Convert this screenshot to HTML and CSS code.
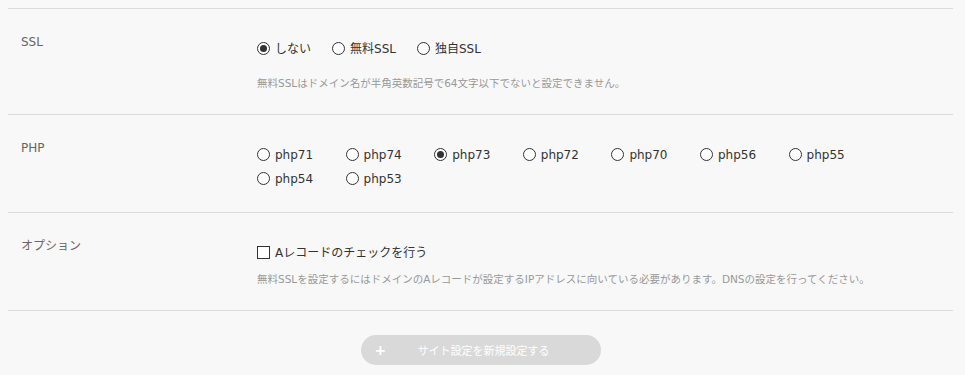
FILE: index.html
```html
<!DOCTYPE html>
<html lang="ja">

<head>
  <meta charset="UTF-8">
  <meta name="viewport" content="width=device-width, initial-scale=1.0">
  <title>サイト設定</title>
  <link rel="stylesheet" href="styles.css">
</head>

<body>
  <div class="settings">
    <div class="row">
      <div class="row-label">SSL</div>
      <div class="row-body">
        <div class="choices">
          <label class="choice"><input type="radio" name="ssl" checked><span>しない</span></label>
          <label class="choice"><input type="radio" name="ssl"><span>無料SSL</span></label>
          <label class="choice"><input type="radio" name="ssl"><span>独自SSL</span></label>
        </div>
        <p class="note note-spaced">無料SSLはドメイン名が半角英数記号で64文字以下でないと設定できません。</p>
      </div>
    </div>

    <div class="row">
      <div class="row-label">PHP</div>
      <div class="row-body">
        <div class="choices-grid">
          <label class="choice"><input type="radio" name="php"><span>php71</span></label>
          <label class="choice"><input type="radio" name="php"><span>php74</span></label>
          <label class="choice"><input type="radio" name="php" checked><span>php73</span></label>
          <label class="choice"><input type="radio" name="php"><span>php72</span></label>
          <label class="choice"><input type="radio" name="php"><span>php70</span></label>
          <label class="choice"><input type="radio" name="php"><span>php56</span></label>
          <label class="choice"><input type="radio" name="php"><span>php55</span></label>
          <label class="choice"><input type="radio" name="php"><span>php54</span></label>
          <label class="choice"><input type="radio" name="php"><span>php53</span></label>
        </div>
      </div>
    </div>

    <div class="row">
      <div class="row-label">オプション</div>
      <div class="row-body">
        <label class="choice"><input type="checkbox"><span>Aレコードのチェックを行う</span></label>
        <p class="note">無料SSLを設定するにはドメインのAレコードが設定するIPアドレスに向いている必要があります。DNSの設定を行ってください。</p>
      </div>
    </div>
  </div>

  <div class="actions">
    <button class="submit-btn" disabled><span class="plus">+</span><span class="submit-text">サイト設定を新規設定する</span></button>
  </div>
</body>

</html>
```

FILE: styles.css
```css
body {
  margin: 8px;
  background-color: #f8f8f8;
  font-family: "DejaVu Sans", Verdana, "Noto Sans CJK JP", sans-serif;
  font-size: 12px;
  color: #333;
}

.settings {
  width: 945px;
  border-bottom: 1px solid #dcdcdc;
}

.row {
  display: grid;
  grid-template-columns: 236px 1fr;
  padding: 21px 0 21px 13px;
  border-top: 1px solid #dcdcdc;
}

.row-label {
  line-height: 24px;
  color: #666;
}

.row-body {
  padding-top: 7px;
}

.choices {
  display: flex;
  gap: 21px;
}

.choices-grid {
  display: grid;
  grid-template-columns: repeat(7, 88.6px);
}

.choice {
  display: inline-flex;
  align-items: center;
  height: 24px;
  line-height: 24px;
  color: #333;
}

.choice input {
  appearance: none;
  -webkit-appearance: none;
  margin: 0 5px 0 0;
  width: 13px;
  height: 13px;
  border: 1px solid #333;
  background: #fff;
  box-sizing: border-box;
  position: relative;
  top: -1px;
}

.choice input[type="radio"] {
  border-radius: 50%;
}

.choice input[type="radio"]:checked::after {
  content: "";
  position: absolute;
  left: 2px;
  top: 2px;
  width: 7px;
  height: 7px;
  border-radius: 50%;
  background: #333;
}

.note {
  margin: 5px 0 0;
  line-height: 19px;
  font-size: 10.5px;
  color: #999;
}

.note-spaced {
  margin-top: 13px;
}

.actions {
  width: 945px;
  display: flex;
  justify-content: center;
  padding-top: 24px;
}

.submit-btn {
  display: flex;
  align-items: center;
  width: 240px;
  height: 30px;
  padding: 0 18px 0 14px;
  border: none;
  border-radius: 15px;
  background-color: #d9d9d9;
  color: #fff;
  font-family: "DejaVu Sans", Verdana, "Noto Sans CJK JP", sans-serif;
  font-size: 11px;
}

.plus {
  width: 10px;
  font-size: 14px;
  font-weight: bold;
}

.submit-text {
  flex: 1;
  text-align: center;
}
```
